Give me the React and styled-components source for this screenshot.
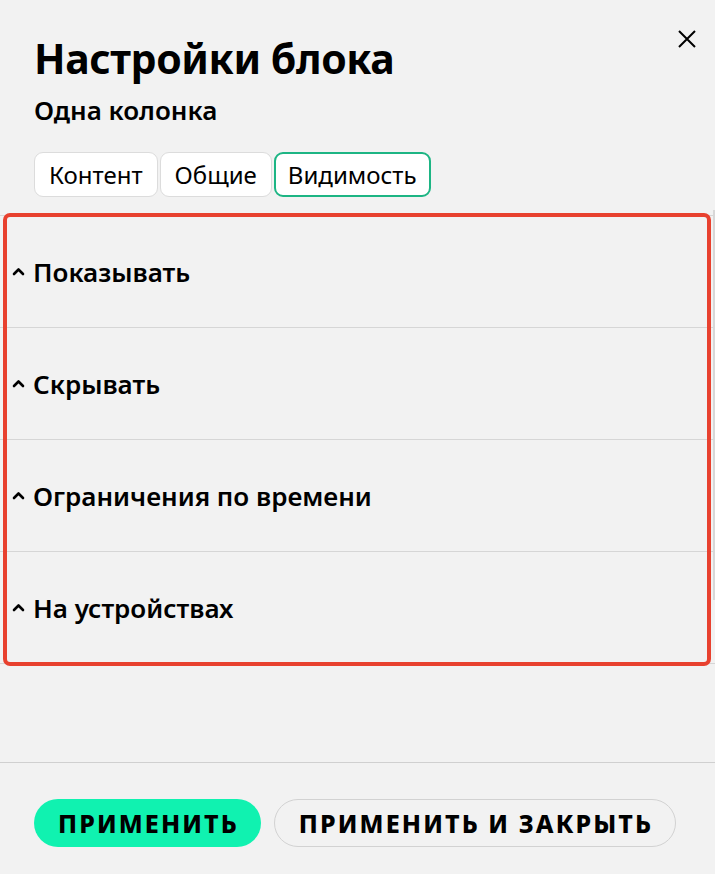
import React from "react";
import styled, { createGlobalStyle } from "styled-components";

const GlobalStyle = createGlobalStyle`
  html, body {
    margin: 0;
    padding: 0;
    background: #f2f2f2;
  }
  * {
    box-sizing: border-box;
  }
`;

const Panel = styled.div`
  position: relative;
  width: 715px;
  min-height: 874px;
  display: flex;
  flex-direction: column;
  background: #f2f2f2;
  color: #000;
  font-family: "Noto Sans", "Liberation Sans", sans-serif;
`;

const Header = styled.div`
  position: relative;
  padding: 33px 34px 0;
`;

const Title = styled.h1`
  margin: 0;
  font-size: 41px;
  line-height: 50px;
  font-weight: 700;
  letter-spacing: -0.4px;
`;

const Subtitle = styled.div`
  margin-top: 11px;
  font-size: 26px;
  line-height: 32px;
  font-weight: 600;
`;

const CloseButton = styled.button`
  position: absolute;
  top: 29px;
  right: 18px;
  width: 20px;
  height: 20px;
  padding: 0;
  border: none;
  background: none;
  cursor: pointer;
  display: flex;
  align-items: center;
  justify-content: center;
`;

const Tabs = styled.div`
  display: flex;
  gap: 2px;
  margin-top: 26px;
`;

const Tab = styled.button`
  height: 45px;
  padding: 0 ${(p) => (p.$active ? "12px" : "14px")};
  border-radius: 9px;
  border: ${(p) => (p.$active ? "2px solid #1db584" : "1px solid #dcdcdc")};
  background: #fff;
  font-family: inherit;
  font-size: 24px;
  color: #000;
  cursor: pointer;
`;

const Body = styled.div`
  flex: 1;
  padding-top: 18px;
`;

const Accordion = styled.div`
  position: relative;
  border-top: 1px solid #d6d6d6;
`;

const Item = styled.div`
  height: 112px;
  display: flex;
  align-items: center;
  gap: 8px;
  padding-left: 12px;
  border-bottom: 1px solid #d6d6d6;
  font-size: 26px;
  font-weight: 600;
`;

const Highlight = styled.div`
  position: absolute;
  top: -3px;
  left: 3px;
  right: 4px;
  bottom: -2px;
  border: 4px solid #e8412f;
  border-radius: 7px;
  pointer-events: none;
`;

const ScrollThumb = styled.div`
  position: absolute;
  top: -6px;
  right: 0;
  width: 2px;
  height: 390px;
  background: #d8d8d8;
`;

const Footer = styled.div`
  display: flex;
  gap: 13px;
  padding: 36px 34px 27px;
  border-top: 1px solid #d0d0d0;
`;

const ActionButton = styled.button`
  height: 48px;
  padding: 0 22px 0 24px;
  border-radius: 24px;
  border: ${(p) => (p.$primary ? "none" : "1px solid #d2d2d2")};
  background: ${(p) => (p.$primary ? "#10f2b0" : "transparent")};
  font-family: inherit;
  font-size: 25px;
  font-weight: 800;
  letter-spacing: 2.1px;
  text-transform: uppercase;
  color: #000;
  cursor: pointer;
`;

const Chevron = () => (
  <svg width="13" height="9" viewBox="0 0 13 9" fill="none">
    <polyline points="2,7 6.5,2.5 11,7" stroke="#000" strokeWidth="2.6" strokeLinecap="round" strokeLinejoin="round" />
  </svg>
);

const sections = ["Показывать", "Скрывать", "Ограничения по времени", "На устройствах"];

export default function App() {
  return (
    <>
      <GlobalStyle />
      <Panel>
        <Header>
          <Title>Настройки блока</Title>
          <Subtitle>Одна колонка</Subtitle>
          <CloseButton aria-label="Закрыть">
            <svg width="18" height="18" viewBox="0 0 18 18">
              <path d="M1 1 L17 17 M17 1 L1 17" stroke="#000" strokeWidth="2" />
            </svg>
          </CloseButton>
          <Tabs>
            <Tab>Контент</Tab>
            <Tab>Общие</Tab>
            <Tab $active>Видимость</Tab>
          </Tabs>
        </Header>
        <Body>
          <Accordion>
            {sections.map((s) => (
              <Item key={s}>
                <Chevron />
                {s}
              </Item>
            ))}
            <ScrollThumb />
            <Highlight />
          </Accordion>
        </Body>
        <Footer>
          <ActionButton $primary>Применить</ActionButton>
          <ActionButton>Применить и закрыть</ActionButton>
        </Footer>
      </Panel>
    </>
  );
}
